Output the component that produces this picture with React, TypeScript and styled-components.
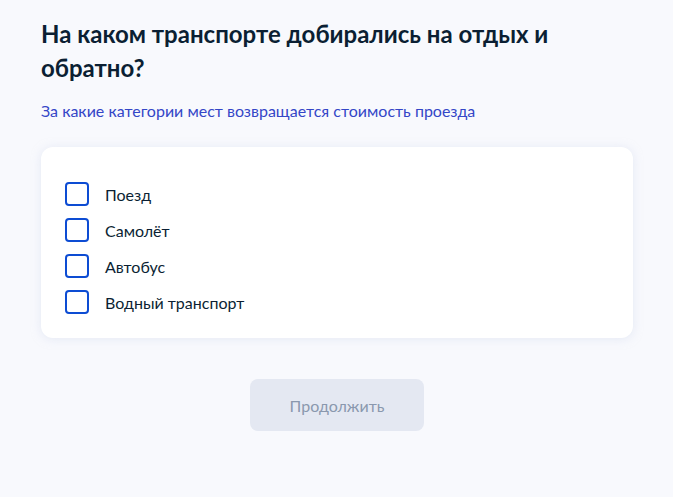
import React from "react";
import styled, { createGlobalStyle } from "styled-components";

const Global = createGlobalStyle`
  html, body { margin: 0; padding: 0; background: #f8f9fd; }
  body { font-family: Lato, "Noto Sans", sans-serif; color: #0b1f33; }
`;

const Page = styled.div`
  padding: 17px 40px 0 41px;
  width: 592px;
  display: flex;
  flex-direction: column;
`;

const Title = styled.h1`
  margin: 0;
  font-size: 24px;
  line-height: 34px;
  font-weight: 700;
  color: #0b1f33;
`;

const Hint = styled.a`
  margin-top: 14px;
  font-size: 16px;
  line-height: 24px;
  color: #3446c7;
  text-decoration: none;
`;

const Card = styled.div`
  margin-top: 24px;
  background: #fff;
  border-radius: 12px;
  box-shadow: 0 1px 10px rgba(210, 218, 238, 0.5);
  padding: 35px 24px 24px;
  display: flex;
  flex-direction: column;
  gap: 12px;
`;

const Row = styled.label`
  display: flex;
  align-items: center;
  gap: 16px;
  height: 24px;
  font-size: 16px;
  color: #0b1f33;
`;

const Box = styled.span`
  width: 24px;
  height: 24px;
  box-sizing: border-box;
  border: 2px solid #0d4cd3;
  border-radius: 4px;
  flex-shrink: 0;
`;

const Actions = styled.div`
  display: flex;
  justify-content: center;
  margin-top: 41px;
`;

const Button = styled.button`
  width: 174px;
  height: 52px;
  border: none;
  border-radius: 8px;
  background: #e4e8f2;
  color: #8a98ae;
  font-family: Lato, "Noto Sans", sans-serif;
  font-size: 16px;
`;

const options = ["Поезд", "Самолёт", "Автобус", "Водный транспорт"];

export default function App() {
  return (
    <>
      <Global />
      <Page>
        <Title>На каком транспорте добирались на отдых и обратно?</Title>
        <Hint>За какие категории мест возвращается стоимость проезда</Hint>
        <Card>
          {options.map((o) => (
            <Row key={o}>
              <Box />
              {o}
            </Row>
          ))}
        </Card>
        <Actions>
          <Button disabled>Продолжить</Button>
        </Actions>
      </Page>
    </>
  );
}
